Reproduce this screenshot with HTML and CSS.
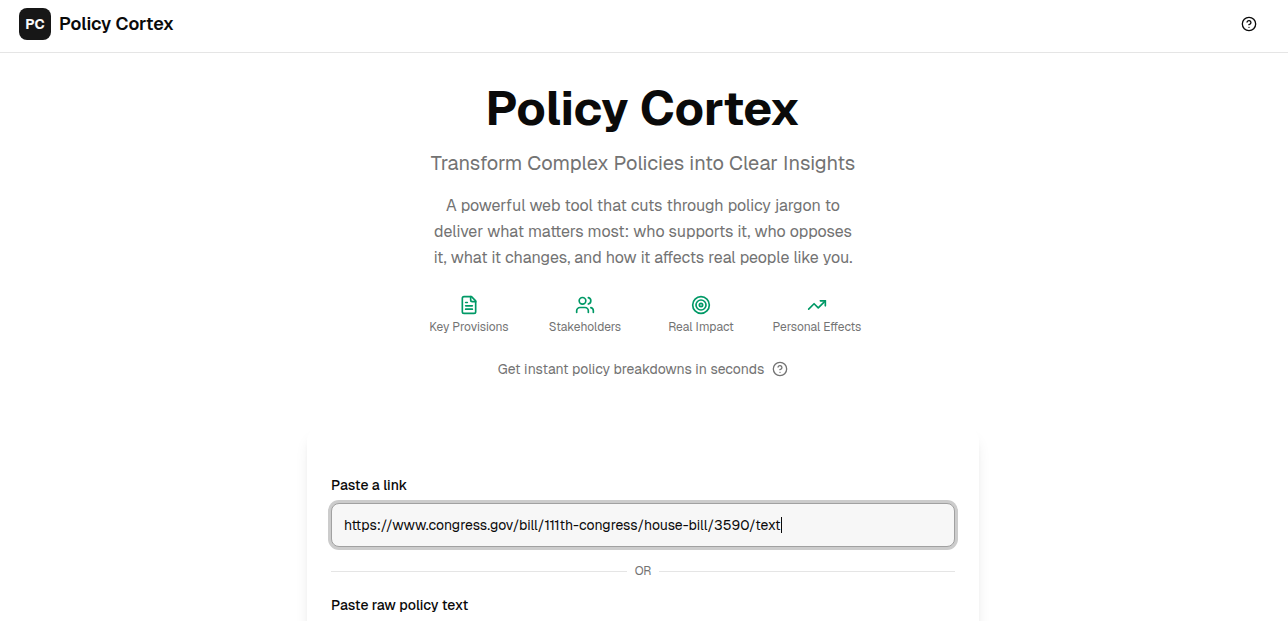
FILE: index.html
```html
<!DOCTYPE html>
<html lang="en">
<head>
    <meta charset="UTF-8">
    <meta name="viewport" content="width=device-width, initial-scale=1.0">
    <title>Policy Cortex</title>
    <link rel="stylesheet" href="styles.css">
</head>
<body>

    <!-- Top bar -->
    <header class="header">
        <a class="brand" href="#">
            <span class="brand-logo">PC</span>
            <span class="brand-name">Policy Cortex</span>
        </a>
        <button class="help-button" type="button" aria-label="Help">
            <svg class="icon icon-small" viewBox="0 0 24 24"><circle cx="12" cy="12" r="10"/><path d="M9.09 9a3 3 0 0 1 5.83 1c0 2-3 3-3 3"/><path d="M12 17h.01"/></svg>
        </button>
    </header>

    <main class="main">
        <!-- Intro -->
        <section class="hero">
            <h1>Policy Cortex</h1>
            <p class="tagline">Transform Complex Policies into Clear Insights</p>
            <p class="description">
                A powerful web tool that cuts through policy jargon to<br>
                deliver what matters most: who supports it, who opposes<br>
                it, what it changes, and how it affects real people like you.
            </p>

            <ul class="features">
                <li>
                    <svg class="icon icon-green" viewBox="0 0 24 24"><path d="M15 2H6a2 2 0 0 0-2 2v16a2 2 0 0 0 2 2h12a2 2 0 0 0 2-2V7Z"/><path d="M14 2v4a2 2 0 0 0 2 2h4"/><path d="M10 9H8"/><path d="M16 13H8"/><path d="M16 17H8"/></svg>
                    <span>Key Provisions</span>
                </li>
                <li>
                    <svg class="icon icon-green" viewBox="0 0 24 24"><path d="M16 21v-2a4 4 0 0 0-4-4H6a4 4 0 0 0-4 4v2"/><circle cx="9" cy="7" r="4"/><path d="M22 21v-2a4 4 0 0 0-3-3.87"/><path d="M16 3.13a4 4 0 0 1 0 7.75"/></svg>
                    <span>Stakeholders</span>
                </li>
                <li>
                    <svg class="icon icon-green" viewBox="0 0 24 24"><circle cx="12" cy="12" r="10"/><circle cx="12" cy="12" r="6"/><circle cx="12" cy="12" r="2"/></svg>
                    <span>Real Impact</span>
                </li>
                <li>
                    <svg class="icon icon-green" viewBox="0 0 24 24"><path d="M22 7 13.5 15.5 8.5 10.5 2 17"/><path d="M16 7h6v6"/></svg>
                    <span>Personal Effects</span>
                </li>
            </ul>

            <div class="note">
                <span>Get instant policy breakdowns in seconds</span>
                <button class="note-button" type="button" aria-label="How it works">
                    <svg class="icon icon-small" viewBox="0 0 24 24"><circle cx="12" cy="12" r="10"/><path d="M9.09 9a3 3 0 0 1 5.83 1c0 2-3 3-3 3"/><path d="M12 17h.01"/></svg>
                </button>
            </div>
        </section>

        <!-- Input form -->
        <form class="card">
            <label for="policy-link">Paste a link</label>
            <div class="field">
                <input type="url" id="policy-link" value="https://www.congress.gov/bill/111th-congress/house-bill/3590/text" autofocus>
                <span class="caret" id="caret"></span>
            </div>
            <div class="divider">OR</div>
            <label for="policy-text">Paste raw policy text</label>
            <textarea id="policy-text" rows="3"></textarea>
        </form>
    </main>

    <script>
        const linkInput = document.getElementById('policy-link');
        const caret = document.getElementById('caret');
        const ctx = document.createElement('canvas').getContext('2d');

        // place the caret after the typed text
        function moveCaret() {
            const style = getComputedStyle(linkInput);
            ctx.font = `${style.fontWeight} ${style.fontSize} ${style.fontFamily}`;
            const before = linkInput.value;
            const left = parseFloat(style.paddingLeft) + parseFloat(style.borderLeftWidth);
            caret.style.left = Math.round(left + ctx.measureText(before).width) + 'px';
        }

        linkInput.addEventListener('input', moveCaret);
        linkInput.focus({ preventScroll: true });
        moveCaret();
    </script>

</body>
</html>
```

FILE: styles.css
```css
* {
    box-sizing: border-box;
}

html {
    overflow-x: hidden;
    scrollbar-width: none;
}

body {
    margin: 0;
    background: #fff;
    color: #0a0a0a;
    font-family: Geist, Inter, "Liberation Sans", sans-serif;
    font-size: 14px;
    line-height: 20px;
}

h1,
p,
ul {
    margin: 0;
    padding: 0;
}

.icon {
    display: block;
    width: 20px;
    height: 20px;
    fill: none;
    stroke: currentColor;
    stroke-width: 2;
    stroke-linecap: round;
    stroke-linejoin: round;
}

.icon-small {
    width: 16px;
    height: 16px;
}

.icon-green {
    color: #009966;
}

/* Header */
.header {
    display: flex;
    align-items: center;
    justify-content: space-between;
    padding: 8px 21px 12px 19px;
    border-bottom: 1px solid #e5e5e5;
}

.brand {
    display: flex;
    align-items: center;
    gap: 8px;
    color: inherit;
    text-decoration: none;
}

.brand-logo {
    display: flex;
    align-items: center;
    justify-content: center;
    width: 32px;
    height: 32px;
    border-radius: 8px;
    background: #171717;
    color: #fafafa;
    font-weight: 700;
}

.brand-name {
    font-size: 18px;
    font-weight: 600;
}

.help-button,
.note-button {
    display: flex;
    align-items: center;
    justify-content: center;
    padding: 0;
    border: 0;
    background: none;
    color: inherit;
    cursor: pointer;
}

.help-button {
    width: 36px;
    height: 32px;
}

/* Hero */
.main {
    padding: 31px 18px 48px 16px;
}

.hero {
    display: flex;
    flex-direction: column;
    align-items: center;
    color: #737373;
    text-align: center;
}

.hero h1 {
    color: #0a0a0a;
    font-size: 48px;
    font-weight: 700;
    line-height: 48px;
}

.tagline {
    margin-top: 17px;
    font-size: 20px;
    line-height: 28px;
}

.description {
    margin-top: 16px;
    font-size: 16px;
    line-height: 26px;
}

.features {
    display: grid;
    grid-template-columns: repeat(4, 1fr);
    gap: 16px;
    width: 100%;
    max-width: 448px;
    margin-top: 24px;
    font-size: 12px;
    line-height: 16px;
    list-style: none;
}

.features li {
    display: flex;
    flex-direction: column;
    align-items: center;
    gap: 4px;
    white-space: nowrap;
}

.note {
    display: flex;
    align-items: center;
    gap: 8px;
    margin-top: 24px;
}

/* Form card */
.card {
    display: flex;
    flex-direction: column;
    max-width: 672px;
    margin: 48px auto 0;
    padding: 48px 24px 24px;
    border-radius: 14px;
    box-shadow: 0 10px 15px -3px rgba(0, 0, 0, 0.1), 0 4px 6px -4px rgba(0, 0, 0, 0.1);
}

.card label {
    font-weight: 500;
}

.field {
    position: relative;
    display: flex;
    margin-top: 8px;
}

.card input,
.card textarea {
    width: 100%;
    border: 1px solid #e5e5e5;
    border-radius: 8px;
    outline: none;
    background: #f7f7f7;
    color: #0a0a0a;
    font: inherit;
}

.card input {
    height: 44px;
    padding: 0 12px;
    caret-color: transparent;
}

.card textarea {
    margin-top: 8px;
    padding: 12px;
    resize: vertical;
}

.card input:focus,
.card textarea:focus {
    border-color: #a1a1a1;
    box-shadow: 0 0 0 3px #cccccc;
}

/* sits over the input, shown only while it has focus */
.caret {
    position: absolute;
    top: 14px;
    display: none;
    width: 1px;
    height: 16px;
    background: #0a0a0a;
}

.card input:focus + .caret {
    display: block;
}

.divider {
    display: flex;
    align-items: center;
    gap: 8px;
    margin: 16px 0;
    color: #737373;
    font-size: 12px;
    line-height: 16px;
}

.divider::before,
.divider::after {
    content: "";
    flex: 1;
    height: 1px;
    background: #e5e5e5;
}
```
